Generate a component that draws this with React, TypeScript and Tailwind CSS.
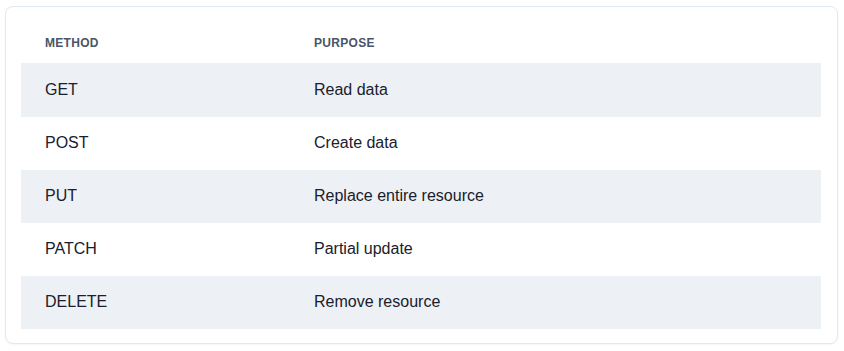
import React from "react";

const rows = [
  ["GET", "Read data"],
  ["POST", "Create data"],
  ["PUT", "Replace entire resource"],
  ["PATCH", "Partial update"],
  ["DELETE", "Remove resource"],
];

export default function App() {
  return (
    <div
      className="w-[844px] h-[351px] bg-white pl-[5px] pt-[6px]"
      style={{ fontFamily: '"Liberation Sans", Arial, sans-serif' }}
    >
      <div className="w-[833px] h-[338px] border border-[#e2e8f0] rounded-[8px] bg-white p-[15px] shadow-[0_1px_2px_rgba(15,23,42,0.04)]">
        <table className="w-[800px] border-collapse">
          <thead>
            <tr className="h-[41px]">
              <th className="w-[269px] pl-[24px] pt-[1px] text-left text-[12px] font-bold uppercase tracking-wide text-[#4a5568] align-middle">
                Method
              </th>
              <th className="pl-[24px] pt-[1px] text-left text-[12px] font-bold uppercase tracking-wide text-[#4a5568] align-middle">
                Purpose
              </th>
            </tr>
          </thead>
          <tbody>
            {rows.map(([m, p], i) => (
              <tr
                key={m}
                className={
                  (i % 2 === 0 ? "bg-[#edf1f5] " : "bg-white ") +
                  (i === 0 ? "h-[54px]" : "h-[53px]")
                }
              >
                <td className="pl-[24px] pb-[1px] text-[16px] text-[#1a202c] align-middle">{m}</td>
                <td className="pl-[24px] pb-[1px] text-[16px] text-[#1a202c] align-middle">{p}</td>
              </tr>
            ))}
          </tbody>
        </table>
      </div>
    </div>
  );
}
